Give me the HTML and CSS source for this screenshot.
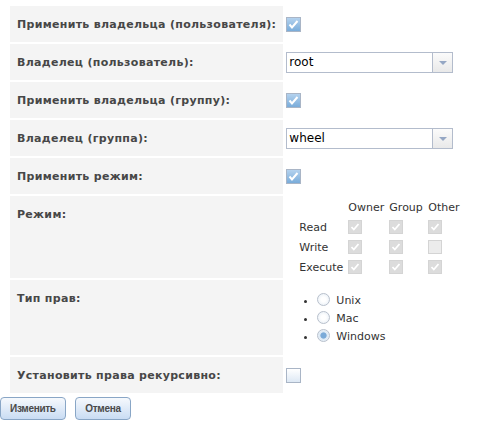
FILE: index.html
```html
<!DOCTYPE html>
<html lang="ru">
<head>
    <meta charset="UTF-8">
    <title>Права доступа</title>
    <link rel="stylesheet" href="styles.css">
</head>
<body>

    <table class="form-table">
        <!-- Owner (user) -->
        <tr>
            <td class="label">Применить владельца (пользователя):</td>
            <td class="value"><span class="cb checked"><svg width="13" height="13" viewBox="0 0 13 13"><path d="M2.5 6.5 L5 9.5 L10.5 3" fill="none" stroke="#fff" stroke-width="2"/></svg></span></td>
        </tr>
        <tr>
            <td class="label">Владелец (пользователь):</td>
            <td class="value">
                <span class="combo"><span class="combo-text">root</span><span class="combo-arrow"></span></span>
            </td>
        </tr>

        <!-- Owner (group) -->
        <tr>
            <td class="label">Применить владельца (группу):</td>
            <td class="value"><span class="cb checked"><svg width="13" height="13" viewBox="0 0 13 13"><path d="M2.5 6.5 L5 9.5 L10.5 3" fill="none" stroke="#fff" stroke-width="2"/></svg></span></td>
        </tr>
        <tr>
            <td class="label">Владелец (группа):</td>
            <td class="value">
                <span class="combo"><span class="combo-text">wheel</span><span class="combo-arrow"></span></span>
            </td>
        </tr>

        <!-- Mode -->
        <tr>
            <td class="label">Применить режим:</td>
            <td class="value"><span class="cb checked"><svg width="13" height="13" viewBox="0 0 13 13"><path d="M2.5 6.5 L5 9.5 L10.5 3" fill="none" stroke="#fff" stroke-width="2"/></svg></span></td>
        </tr>
        <tr>
            <td class="label mode-label">Режим:</td>
            <td class="value">
                <table class="mode-table">
                    <tr>
                        <th></th>
                        <th>Owner</th>
                        <th>Group</th>
                        <th>Other</th>
                    </tr>
                    <tr>
                        <td>Read</td>
                        <td><span class="cb disabled"><svg width="12" height="12" viewBox="0 0 12 12"><path d="M2.5 6 L4.8 8.5 L9.5 3" fill="none" stroke="#fff" stroke-width="1.8"/></svg></span></td>
                        <td><span class="cb disabled"><svg width="12" height="12" viewBox="0 0 12 12"><path d="M2.5 6 L4.8 8.5 L9.5 3" fill="none" stroke="#fff" stroke-width="1.8"/></svg></span></td>
                        <td><span class="cb disabled"><svg width="12" height="12" viewBox="0 0 12 12"><path d="M2.5 6 L4.8 8.5 L9.5 3" fill="none" stroke="#fff" stroke-width="1.8"/></svg></span></td>
                    </tr>
                    <tr>
                        <td>Write</td>
                        <td><span class="cb disabled"><svg width="12" height="12" viewBox="0 0 12 12"><path d="M2.5 6 L4.8 8.5 L9.5 3" fill="none" stroke="#fff" stroke-width="1.8"/></svg></span></td>
                        <td><span class="cb disabled"><svg width="12" height="12" viewBox="0 0 12 12"><path d="M2.5 6 L4.8 8.5 L9.5 3" fill="none" stroke="#fff" stroke-width="1.8"/></svg></span></td>
                        <td><span class="cb disabled off"></span></td>
                    </tr>
                    <tr>
                        <td>Execute</td>
                        <td><span class="cb disabled"><svg width="12" height="12" viewBox="0 0 12 12"><path d="M2.5 6 L4.8 8.5 L9.5 3" fill="none" stroke="#fff" stroke-width="1.8"/></svg></span></td>
                        <td><span class="cb disabled"><svg width="12" height="12" viewBox="0 0 12 12"><path d="M2.5 6 L4.8 8.5 L9.5 3" fill="none" stroke="#fff" stroke-width="1.8"/></svg></span></td>
                        <td><span class="cb disabled"><svg width="12" height="12" viewBox="0 0 12 12"><path d="M2.5 6 L4.8 8.5 L9.5 3" fill="none" stroke="#fff" stroke-width="1.8"/></svg></span></td>
                    </tr>
                </table>
            </td>
        </tr>

        <!-- Permission type -->
        <tr>
            <td class="label type-label">Тип прав:</td>
            <td class="value">
                <ul class="radio-list">
                    <li><span class="radio"></span>Unix</li>
                    <li><span class="radio"></span>Mac</li>
                    <li><span class="radio selected"></span>Windows</li>
                </ul>
            </td>
        </tr>

        <!-- Recursive -->
        <tr>
            <td class="label">Установить права рекурсивно:</td>
            <td class="value"><span class="cb"></span></td>
        </tr>
    </table>

    <div class="buttons">
        <button type="submit">Изменить</button>
        <button type="button">Отмена</button>
    </div>

</body>
</html>
```

FILE: styles.css
```css
body {
    font-family: "DejaVu Sans", Verdana, sans-serif;
    font-size: 11px;
    color: #333;
    margin: 0;
}

.form-table {
    border-spacing: 2px;
    margin: 4px 0 0 8px;
}

.form-table > tbody > tr > td.label {
    width: 273px;
    height: 36px;
    box-sizing: border-box;
    padding: 12px 7px 0 7px;
    vertical-align: top;
    background-color: #f4f4f4;
    color: #474747;
    font-weight: bold;
    letter-spacing: 0.3px;
    line-height: 14px;
    white-space: nowrap;
}

.form-table > tbody > tr > td.mode-label {
    height: 82px;
}

.form-table > tbody > tr > td.type-label {
    height: 75px;
}

.form-table > tbody > tr > td.value {
    width: 180px;
    padding: 0 0 0 1px;
    vertical-align: middle;
}

/* checkboxes */
.cb {
    display: inline-block;
    width: 13px;
    height: 13px;
    border: 1px solid #a9b5c6;
    background: linear-gradient(#ffffff, #dde8f4);
    vertical-align: middle;
}

.cb svg {
    display: block;
}

.cb.checked {
    background: linear-gradient(#b4d2ee, #79acda);
}

.cb.disabled {
    width: 12px;
    height: 12px;
    border-color: #d4d4d4;
    background: #dcdcdc;
}

.cb.disabled.off {
    background: #ececec;
}

/* combo box */
.combo {
    display: flex;
    width: 167px;
    height: 21px;
    box-sizing: border-box;
    border: 1px solid #b3bccc;
    background: #fff;
}

.combo-text {
    flex: 1;
    padding-left: 2px;
    font-size: 12px;
    line-height: 19px;
    color: #000;
}

.combo-arrow {
    width: 19px;
    border-left: 1px solid #b3bccc;
    background: linear-gradient(#fbfbfb, #e9e9e9);
    position: relative;
}

.combo-arrow::after {
    content: "";
    position: absolute;
    left: 6px;
    top: 8px;
    border-left: 4px solid transparent;
    border-right: 4px solid transparent;
    border-top: 4px solid #95a7c4;
}

/* mode table */
.mode-table {
    border-spacing: 0;
    margin-left: 13px;
}

.mode-table th,
.mode-table td {
    height: 20px;
    padding: 0;
    text-align: left;
    font-weight: normal;
    vertical-align: middle;
}

.mode-table td:first-child {
    width: 49px;
}

.mode-table th:nth-child(2),
.mode-table td:nth-child(2) {
    width: 41px;
}

.mode-table th:nth-child(3),
.mode-table td:nth-child(3) {
    width: 39px;
}

/* radio list */
.radio-list {
    margin: 11px 0 9px 0;
    padding-left: 31px;
}

.radio-list li {
    line-height: 18px;
}

.radio {
    display: inline-block;
    width: 11px;
    height: 11px;
    margin-right: 6px;
    border: 1px solid #b8c0cc;
    border-radius: 50%;
    background: radial-gradient(#ffffff 30%, #e4ecf4);
    vertical-align: -2px;
}

.radio.selected {
    background: radial-gradient(#7aaad8 0, #7aaad8 35%, #dbe8f4 45%, #f4f8fc);
}

/* buttons */
.buttons {
    margin-top: 2px;
}

button {
    height: 23px;
    padding: 0 9px;
    margin-right: 6px;
    border: 1px solid #89a6c6;
    border-radius: 4px;
    background: linear-gradient(#f6f9fd, #c9dcf3);
    color: #4a4a4a;
    font-family: "Liberation Sans", Arial, sans-serif;
    font-size: 10px;
    font-weight: bold;
    letter-spacing: -0.3px;
    cursor: pointer;
}
```
